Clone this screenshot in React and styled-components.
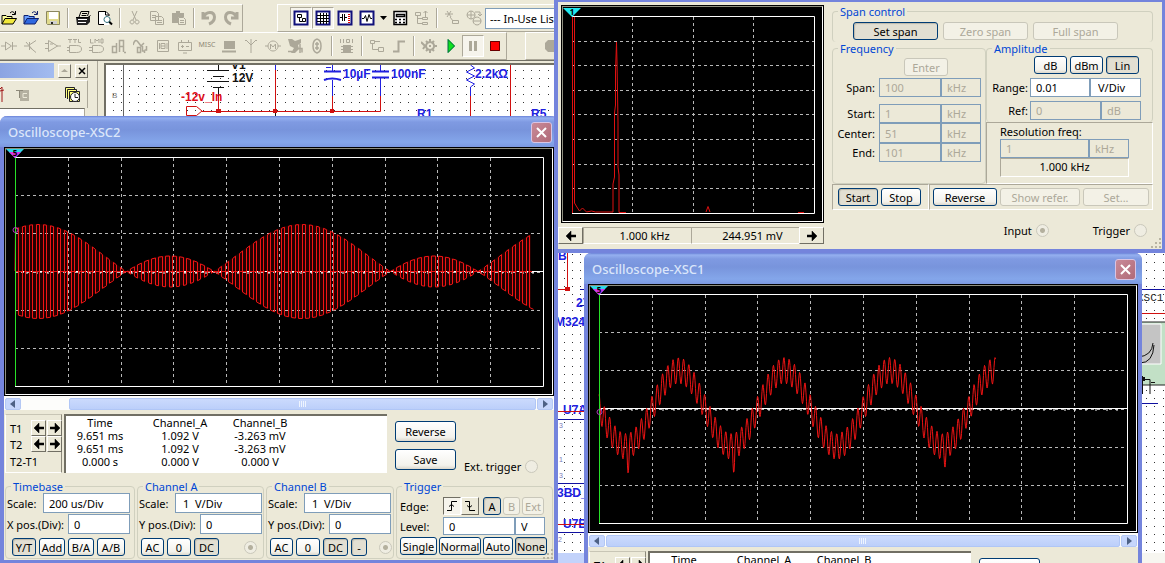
import React, { useId } from 'react';
import styled, { createGlobalStyle } from 'styled-components';

const GlobalStyle = createGlobalStyle`
*{
    box-sizing:border-box;
}
body{
    margin:0;
    overflow:hidden;
    background:#ece9d8;
    font-family:"Noto Sans", Tahoma, sans-serif;
    font-size:11px;
    line-height:13px;
    color:#000;
}
button, input, select{
    font:inherit;
    color:inherit;
    margin:0;
}
svg{
    display:block;
}
`

const Desktop = styled.div`
position:relative;
display:flex;
flex-direction:column;
height:100vh;
overflow:hidden;
padding-top:4px;
`

/* ---------- toolbars ---------- */

const ToolRow = styled.div`
display:flex;
align-items:stretch;
gap:${props => props.$gap}px;
height:${props => props.$height}px;
`
const Toolbar = styled.div`
display:flex;
align-items:center;
margin-left:${props => props.$first ? '-3px' : '0'};
padding-left:${props => props.$pad || 0}px;
border-top:1px solid #fff;
border-left:1px solid #fff;
border-right:1px solid #aca899;
border-bottom:1px solid #aca899;
flex:${props => props.$grow ? '1' : 'none'};
`
const ToolButton = styled.button`
display:flex;
align-items:center;
justify-content:center;
width:${props => props.$narrow ? 11 : 22}px;
height:22px;
padding:0;
border:1px solid ${props => props.$pressed ? '#aca899' : 'transparent'};
border-right-color:${props => props.$pressed ? '#fff' : 'transparent'};
border-bottom-color:${props => props.$pressed ? '#fff' : 'transparent'};
background:${props => props.$pressed ? '#f6f4ec' : 'transparent'};
flex:none;
`
const ToolSeparator = styled.span`
width:2px;
height:20px;
margin:0 3px;
border-left:1px solid #aca899;
border-right:1px solid #fff;
`
const InUseSelect = styled.select`
width:140px;
height:21px;
padding:0 4px;
border:1px solid #7f9db9;
background:#fff;
appearance:none;
`

const GRAY = '#aca899'

// f = filled parts, s = stroked parts, [path, colour]
const ICONS = {
    open: { f: [['M1 14V5h5l1 1h5v3H4z', '#ffff9c'], ['M1 14l3-6h12l-4 6z', '#f0e83c']], s: [['M1 14V5.5h4l1 1h5v2M1 14l3-5.500h11.500l-3.500 5.500zM9 3q3-3 5 1M14.500 1v3.500H11', '#000']] },
    openBlue: { f: [['M1 14V5h5l1 1h5v3H4z', '#6aa0ff'], ['M1 14l3-6h12l-4 6z', '#2f68e0']], s: [['M1 14V5.500h4l1 1h5v2M1 14l3-5.500h11.500l-3.500 5.500zM9 3q3-3 5 1M14.500 1v3.500H11', '#10206a']] },
    save: { f: [['M2 2h13v13H3l-1-1z', '#e0da8c'], ['M4 2h9v7H4z', '#fff'], ['M5 11h7v4H5z', '#d0d0d0'], ['M6 12h2v3H6z', '#222']], s: [['M1.500 1.500h13v13h-12l-1-1z', '#8a8660']] },
    print: { f: [['M1 7h12l2-1v6l-3 3H2z', '#222'], ['M3 9h9v1H3zM3 12h8v1H3z', '#fff']], s: [['M4 7l2-5.500h8L12.500 6M7 3.500h5M6.500 5.500h5M1 7.500h12l2.500-2', '#000']] },
    preview: { f: [['M1 1h8l3 3v11H1z', '#fff']], s: [['M7 14.500H1.500v-13H9l3 3V6M8.500 1.500V5H12', '#000'], ['M12 11.500l3 3', '#000', 2], ['M10 6.500a3 3 0 1 0 .1 0z', '#2b6d7a']] },
    cut: { s: [['M5 1l4 9M10 1L6 10M5 10a2 2 0 1 0 .1 0M10 10a2 2 0 1 0 .1 0', GRAY]] },
    copy: { s: [['M1.500 1.500h6l2 2v7h-8zM6.500 6.500h6l2 2v6h-8zM3 5.500h4M3 7.500h3M8 10.500h5M8 12.500h5', GRAY]] },
    paste: { f: [['M1 3h4V1h4v2h4v4H7v6H1z', GRAY]], s: [['M7.500 7.500h5l2 2v5h-7zM9 10.500h4M9 12.500h4', GRAY]] },
    undo: { s: [['M2 2v6h6M2.500 7.500C5 1 13 1 13.500 7c0 4-3 6-5.500 7', GRAY, 3]] },
    redo: { s: [['M14 2v6H8M13.500 7.500C11 1 3 1 2.500 7c0 4 3 6 5.500 7', GRAY, 3]] },
    tree: { f: [['M1 1h14v14H1z', '#fff']], s: [['M1.500 1.500h13v13h-13z', '#10107a', 2], ['M4.500 4.500h4v3h-4zM9.500 8.500h3v3h-3zM6.500 8v3.500h3', '#000']] },
    sheet: { f: [['M1 1h14v14H1z', '#fff']], s: [['M1.500 1.500h13v13h-13z', '#10107a', 2], ['M2 5.500h12M2 8.500h12M2 11.500h12M5.500 3v11M8.500 3v11M11.500 3v11', '#000']] },
    parts: { f: [['M1 1h14v14H1z', '#fff']], s: [['M1.500 1.500h13v13h-13z', '#10107a', 2], ['M3 7.500h2M5.500 4v7M7.500 4v7M8 7.500h2', '#000'], ['M11 4.500h2M11 6.500h2M11 8.500h2M11 10.500h2M11 12.500h2', '#d00']] },
    graph: { f: [['M1 1h14v14H1z', '#fff']], s: [['M1.500 1.500h13v13h-13z', '#10107a', 2], ['M3 8.500h2l1.500-3 1.500 6 2-7 1.500 4H13', '#000']] },
    drop: { f: [['M0 6h7L3.500 10z', '#000']] },
    calc: { f: [['M2 2h13v13H2z', '#fff']], s: [['M2 1.500h12.500v13H2zM4.500 4.500h8v2h-8zM3 9.500h2M7 9.500h2M11 9.500h2M3 12.500h2M7 12.500h2M11 12.500h2', '#000', 1.5]] },
    hier: { s: [['M1.500 2.500h5v3h-5zM8.500 7.500h5v2h-5zM8.500 12.500h5v2h-5zM3.500 6v7.500h5M3.500 8.500h5M11.500 7V1M9.500 3l2-2 2 2', GRAY]] },
    wire: { s: [['M1 4h8M3 1l4 6M7 1L3 7M6 7l3 4M8.500 10.500h6v3h-6z', GRAY]] },
    globes: { s: [['M5 1a4 4 0 1 0 .1 0M11 7a4 4 0 1 0 .1 0M1 5h8M5 1v8M7 11h8M9 2h5v3M12 4l2 2 2-2', GRAY]] },
    diode: { s: [['M0 8h4M4.500 4v8l6-4zM11.500 4v8M12 8h4', GRAY]] },
    transistor: { s: [['M1 8h5M6.500 4v8M7 6.500l6-4M7 9.500l6 5M3 4l6 7', GRAY]] },
    opamp: { s: [['M3.500 2.500v11l9-5.500zM0 5.500h3M0 10.500h3M12 8h4M5 6h3', GRAY]] },
    gateA: { s: [['M1 1.500h4M3 1v4M6 1.500h4M8 1v4M11.500 1v3.500H14M2.500 7.500h7q5 0 5 3.500t-5 3.500h-7zM0 9.500h2M0 12.500h2', GRAY]] },
    gateB: { s: [['M1.500 1v4h3M6 5V1l2 2 2-2v4M12 1h2v4h-2zM3.500 7.500h6q5 0 5 3.500t-5 3.500h-6zM0 9.500h3M0 12.500h3', GRAY]] },
    mixed: { s: [['M1.500 8.500h4v6h-4zM5.500 5v10M8.500 14V2.500h4V14M8.500 8.500h4M13 14.500h2', GRAY, 1.5]] },
    wave: { s: [['M0 7q2-7 5-3t3 4 3-3M4.500 9.500h3v5h-3zM9.500 8v5h2v2M13.500 8v4h-2', GRAY, 1.5]] },
    display: { s: [['M2.500 2.500h11v11h-11zM6 5.500h4v5H6zM6 8h4M4.500 5v6M12 5v6', GRAY]] },
    fuse: { s: [['M1.500 4.500h13v8h-13zM4.500 2v2M11.500 2v2M4 8.500h3M9 8.500h3M5.500 7v3M6 15h4', GRAY]] },
    laptop: { f: [['M3 3h11v8H3z', GRAY]], s: [['M1 13.500h14', GRAY, 2]] },
    antenna: { s: [['M8 15V7L3 2M8 7l5-5M8 1v6M2 2.500h2M12 2.500h2', GRAY]] },
    motor: { s: [['M0 8h3M13 8h3M8 3a5 5 0 1 0 .1 0M5.500 11V6l2.500 3 2.500-3v5', GRAY]] },
    ladder: { f: [['M1 1h4l3 2 6-2v4l-3 2 1 4-4 4H4l3-5-4-2z', GRAY]], s: [['M1 13.500h4M11 10.500h4v4M13 6v9', GRAY, 1.5]] },
    ring: { s: [['M8 1q4 1 4 7t-4 7q-4-1-4-7t4-7M8 4v8M6 6h4M6 10h4', GRAY, 1.5]] },
    chip: { f: [['M4 7h8v8H4z', GRAY]], s: [['M1.500 1v4M4.500 1v4M7.500 1.500h3v3h-3zM13.500 1v4M2 8.500h12M2 11.500h12M2 14.500h12', GRAY]] },
    block: { s: [['M1.500 2.500h4v3h-4zM9.500 9.500h5v4h-5zM3.500 6v5.500H9M6 3.500h5', GRAY]] },
    step: { s: [['M2 13.500h5.500v-10H14', GRAY, 2]] },
    gear: { s: [['M0 4l4 4-2 3M9 4a4 4 0 1 0 .1 0', GRAY, 2], ['M9 1v3M9 12v3M13 8h3M5 3l2 2M11 11l2 2M13 3l-2 2M5 13l2-2M9 7v2', GRAY, 2]] },
    run: { f: [['M5 1l7 7-7 7z', '#10e020']], s: [['M5 1.500l6.500 6.500L5 14.500z', '#064']] },
    pause: { f: [['M4 3h3v10H4zM9 3h3v10H9z', GRAY]] },
    stop: { f: [['M3 3h10v10H3z', '#f00']], s: [['M3.500 3.500h9v9h-9z', '#600']] },
    stopGray: { f: [['M5 2h11v12H5l-3-3V5z', GRAY]] },
    misc: { text: 'MISC' },
}

function Icon({ name }) {
    const icon = ICONS[name]
    return (
        <svg width={name === 'drop' ? 7 : name === 'misc' ? 18 : 16} height="16" fill="none">
            {(icon.f || []).map(([d, fill]) => <path key={d} d={d} fill={fill} />)}
            {(icon.s || []).map(([d, stroke, w]) => <path key={d} d={d} stroke={stroke} strokeWidth={w || 1} />)}
            {icon.text && <text x="9" y="9" textAnchor="middle" fontSize="7" fill="#8c8876">{icon.text}</text>}
        </svg>
    )
}

function Tools({ items, ...rest }) {
    return (
        <Toolbar {...rest}>
            {items.map((item, i) => {
                if (item === '|') return <ToolSeparator key={i} />
                const name = item.replace('*', '')
                return (
                    <ToolButton key={i} aria-label={name} $pressed={item.endsWith('*')} $narrow={name === 'drop'}>
                        <Icon name={name} />
                    </ToolButton>
                )
            })}
            {rest.children}
        </Toolbar>
    )
}

/* ---------- dock and schematic ---------- */

const Workspace = styled.div`
display:flex;
flex:1;
min-height:0;
border-top:1px solid #716f64;
`
const Dock = styled.div`
display:flex;
flex-direction:column;
width:98px;
flex:none;
padding:2px 9px 0 0;
border-right:1px solid #aca899;
`
const DockTitle = styled.div`
display:flex;
align-items:center;
gap:4px;
height:15px;
`
const DockStripe = styled.span`
flex:1;
height:15px;
background:linear-gradient(90deg,#8ba4e2,#a3bcf0);
`
const DockButton = styled.button`
display:flex;
align-items:center;
justify-content:center;
width:13px;
height:14px;
padding:0;
border:1px solid;
border-color:#fff #716f64 #716f64 #fff;
background:#ece9d8;
`
const DockTools = styled.div`
display:flex;
align-items:center;
justify-content:space-between;
height:28px;
margin-top:2px;
padding-right:6px;
border-top:1px solid #fff;
border-right:1px solid #aca899;
`
const DockTree = styled.div`
flex:1;
margin-right:3px;
border-top:1px solid #716f64;
border-right:1px solid #aca899;
background:#fff;
`
const Editor = styled.div`
display:flex;
flex-direction:column;
flex:1;
min-width:0;
margin-left:6px;
margin-top:2px;
border-top:2px solid #716f64;
border-left:2px solid #716f64;
background:#fff;
`
const Sheet = styled.svg`
flex:1;
width:100%;
min-height:0;
`
const EditorScroll = styled.div`
height:10px;
flex:none;
background:#f7f6f0;
`
const EditorThumb = styled.div`
width:60%;
height:10px;
background:#c3d3fb;
`

// snap point grid of the sheet, 8.2px apart
function gridDots() {
    let d = ''
    for (let y = 5; y < 1000; y += 8)
        for (let x = 7; x < 1900; x += 8.2)
            d += `M${Math.round(x)} ${y}h1`
    return d
}
const DOTS = gridDots()

const BLUE = '#2020e0'
const WIRE = '#d01010'

function Schematic() {
    return (
        <Sheet>
            <path d={DOTS} transform="translate(0 .5)" stroke="#333" shapeRendering="crispEdges" />
            <g transform="translate(-106 -65)" fill="none" fontFamily='"Liberation Sans", Arial, sans-serif' fontWeight="bold" fontSize="12">
                <path d="M123.500 65V560" stroke="#666" />
                <text x="112" y="98" fontSize="8" fontWeight="normal" fill="#777">B</text>

                <path d="M218.500 65V70M207 70.500h22M213 76.500h11M207 81.500h22M213 87.500h11M218.500 88v9M275.500 111v8" stroke="#111" />
                <text x="231" y="69" fill="#111">V1</text>
                <text x="232" y="82" fill="#111">12V</text>
                <path d="M218.500 96v15M275.500 70v41M332.500 96v15M380.500 96v15.500H202M470.500 96v22M510.500 65v53M186.500 106.500h10l5.500 4.500-5.500 4.500h-10z" stroke={WIRE} />
                <path d="M216 109h5v4h-5zM273 109h4v4h-4zM330 109h4v4h-4z" fill={WIRE} />
                <text x="181" y="101" fill="#e01020">-12v_In</text>

                <path d="M275.500 65v5M332.500 65v6M332.500 80v16M380.500 65v6M380.500 78v18M326 67.500h5M470.500 65l4 3-8 4 8 4-8 4 8 4-4 3v9" stroke={BLUE} />
                <path d="M324 71.500h17M324 80q8-3 17 0M372 71.500h17M372 77.500h17" stroke={BLUE} strokeWidth="2" />
                <g fill={BLUE}>
                    <text x="343" y="78">10µF</text>
                    <text x="391" y="78">100nF</text>
                    <text x="475" y="78">2.2kΩ</text>
                    <text x="417" y="118">R1</text>
                    <text x="531" y="118">R5</text>
                    <text x="550" y="260">EB</text>
                    <text x="576" y="307">27</text>
                    <text x="555" y="326">M324N</text>
                    <text x="563" y="414">U7A</text>
                    <text x="557" y="497">3BD_1</text>
                    <text x="563" y="528">U7B</text>
                </g>
                <path d="M567.500 240v49M540 289.500h28M540 411.500h50M540 524.500h50M1135 313.500h40" stroke={WIRE} />
                <path d="M565 287h5v4h-5z" fill={WIRE} />
                <path d="M580 289.500h10M580 305.500h10M540 419.500h50M540 483.500h50M540 532.500h50M1135 289.500h40M1135 403.500h23" stroke="#1010a0" />
                <g fontSize="7" fontWeight="normal" fill="#7a7ab8">
                    <text x="559" y="428">3</text>
                    <text x="559" y="462">1</text>
                    <text x="559" y="478">3</text>
                    <text x="558" y="542">2</text>
                </g>

                <text x="1137" y="301" fontFamily='"Liberation Mono", monospace' fontSize="11" fontWeight="normal" fill="#222">XSC1</text>
                <path d="M1130 322h45v63h-45z" fill="#c2e0c6" stroke="#222" />
                <path d="M1130 324h31v40h-31z" fill="#c4c4c4" stroke="#fff" />
                <path d="M1138 357q14-1 15-14M1140 363q13 0 14-18" stroke="#111" />
                <path d="M1142 379.500h8V394M1142.500 376v18M1151 382.500h4" stroke="#111" />
                <path d="M1141 377h4v4h-4z" fill="#111" />
            </g>
        </Sheet>
    )
}

/* ---------- windows ---------- */

const Window = styled.section`
position:absolute;
left:${props => props.$left}px;
top:${props => props.$top}px;
width:558px;
border:4px solid #7484dc;
border-top:0;
border-bottom-width:3px;
border-radius:7px 7px 0 0;
background:#ece9d8;
`
const TitleBar = styled.header`
display:flex;
align-items:center;
justify-content:space-between;
height:31px;
margin:0 -4px;
padding:1px 6px 0 8px;
border-radius:7px 7px 0 0;
background:linear-gradient(#6a82d8 0,#95b0f0 2px,#7f9ae2 6px,#7894dc 14px,#84a6ea 26px,#7c98e0 31px);
`
const Title = styled.h1`
margin:0;
font-size:13px;
line-height:18px;
font-weight:500;
color:#dbe6fa;
`
const CloseButton = styled.button`
display:flex;
align-items:center;
justify-content:center;
width:21px;
height:21px;
padding:0;
border:1px solid #d9c4e4;
border-radius:3px;
background:linear-gradient(135deg,#c98a98,#b06a78);
`
const AnalyzerWindow = styled.section`
position:absolute;
left:554px;
right:0;
top:0;
display:flex;
height:253px;
padding:3px 9px 0 3px;
border:solid #7484dc;
border-width:2px 3px 4px 4px;
background:#ece9d8;
`
const Screen = styled.div`
border:1px solid #000;
background:#000;
`
const ScreenInner = styled.div`
border:1px solid;
border-color:#8f8f80 #fff #fff #8f8f80;
`
const Grip = styled.svg`
position:absolute;
right:0;
bottom:0;
`

function CornerGrip() {
    return (
        <Grip width="12" height="12">
            <path d="M9 1h2v2H9zM5 5h2v2H5zM9 5h2v2H9zM1 9h2v2H1zM5 9h2v2H5zM9 9h2v2H9z" fill="#b8b4a2" />
        </Grip>
    )
}

function Arrow({ back }) {
    return (
        <svg width="10" height="10">
            <path d={back ? 'M0 5l5-5v4h5v2H5v4z' : 'M10 5L5 0v4H0v2h5v4z'} fill="#000" stroke="#000" strokeWidth=".5" />
        </svg>
    )
}

/* ---------- controls ---------- */

const Btn = styled.button`
width:${props => props.$w}px;
height:${props => props.$h || 18}px;
flex:none;
padding:0;
line-height:15px;
text-align:center;
white-space:nowrap;
border:1px solid #003c74;
border-radius:3px;
background:${props => props.$on ? '#e2dfd2' : 'linear-gradient(#fff,#f3f2ec 80%,#dcd8cc)'};
box-shadow:${props => props.$on ? 'inset 1px 1px 1px #bdb9aa' : 'none'};
&:disabled{
    color:#aca899;
    border-color:#c9c7ba;
    background:#f3f1e6;
}
`
const TextInput = styled.input`
width:${props => props.$w}px;
height:${props => props.$h || 19}px;
flex:none;
padding:0 0 0 ${props => props.$pad || 5}px;
border:1px solid #7f9db9;
border-radius:0;
background:#fff;
&:disabled{
    color:#aca899;
    background:#ece9d8;
}
`
const Group = styled.fieldset`
min-width:0;
margin:0;
padding:${props => props.$padTop || 0}px 1px 2px;
border:1px solid #d0d0bf;
border-bottom-width:${props => props.$open ? 0 : 1}px;
border-radius:4px;
`
const Legend = styled.legend`
height:13px;
margin-left:4px;
padding:0 2px;
color:#0046d5;
`
const Row = styled.div`
display:flex;
align-items:center;
justify-content:${props => props.$justify || 'flex-start'};
gap:${props => props.$gap || 0}px;
margin-top:${props => props.$mt || 0}px;
padding:0 ${props => props.$pr || 0}px 0 ${props => props.$pl || 0}px;
`
const Label = styled.label`
width:${props => props.$w ? props.$w + 'px' : 'auto'};
flex:none;
text-align:${props => props.$right ? 'right' : 'left'};
white-space:nowrap;
`
const Radio = styled.input`
appearance:none;
width:13px;
height:13px;
flex:none;
border:1px solid #cac8bb;
border-radius:50%;
background:#efede2;
&:checked{
    background:radial-gradient(#b4b09e 0 2px,#efede2 3px);
}
`

function Field({ label, labelWidth, right, gap, mt, w, value, h, pad, unit, unitWidth, disabled }) {
    const id = useId()
    return (
        <Row $mt={mt}>
            <Row $gap={gap}>
                <Label htmlFor={id} $w={labelWidth} $right={right}>{label}</Label>
                <TextInput id={id} $w={w} $h={h} $pad={pad} defaultValue={value} disabled={disabled} />
            </Row>
            {unit && <TextInput aria-label={label + ' unit'} $w={unitWidth} $h={h} $pad={unitWidth > 45 ? 7 : 5} defaultValue={unit} disabled={disabled} />}
        </Row>
    )
}

function RadioField({ label, checked }) {
    return (
        <Row as="label" $gap={4}>
            {label}
            <Radio type="radio" defaultChecked={checked} disabled />
        </Row>
    )
}

/* ---------- oscilloscope ---------- */

const ScrollBar = styled.div`
display:flex;
justify-content:space-between;
height:14px;
padding:2px 1px 0;
background:#fdfdfb;
`
const ScrollButton = styled.button`
display:flex;
align-items:center;
justify-content:center;
width:16px;
height:12px;
padding:0;
border:1px solid #b4c8f4;
border-radius:2px;
background:#c6d6fc;
`
const ScrollTrack = styled.div`
display:flex;
flex:1;
padding-left:${props => props.$offset}px;
padding-right:1px;
`
const ScrollThumb = styled.div`
display:flex;
align-items:center;
justify-content:center;
flex:1;
height:12px;
border:1px solid #b0c6f6;
border-radius:2px;
background:linear-gradient(#cbdafd,#bccffa);
`
const Readings = styled.div`
display:flex;
gap:2px;
padding:4px 1px 0;
`
const Cursors = styled.div`
display:grid;
grid-template-columns:21px 16px 16px;
grid-template-rows:16px 16px 18px;
align-items:center;
width:57px;
height:59px;
padding:5px 0 0 4px;
white-space:nowrap;
border:1px solid #aca899;
border-color:#c8c5b5 #8d8a7c #fff #fff;
`
const StepButton = styled.button`
display:flex;
align-items:center;
justify-content:center;
width:${props => props.$wide ? 25 : 15}px;
height:${props => props.$wide ? 17 : 16}px;
padding:0;
border:1px solid;
border-color:#fff #716f64 #716f64 #fff;
background:#ece9d8;
`
const Readout = styled.div`
width:323px;
height:59px;
border-top:2px solid #716f64;
border-left:2px solid #716f64;
background:#fff;
`
const ReadoutTable = styled.table`
border-collapse:collapse;
table-layout:fixed;
width:240px;
margin-left:-6px;
th, td{
    width:80px;
    padding:0;
    text-align:center;
    font-weight:normal;
    line-height:13px;
}
`
const SideButtons = styled.div`
display:flex;
flex-direction:column;
gap:7px;
padding:7px 0 0 6px;
`
const ExtTrigger = styled.div`
display:flex;
align-items:flex-end;
padding-left:6px;
`
const Groups = styled.div`
display:grid;
grid-template-columns:130px 127px 128px 1fr;
gap:2px;
padding:7px 1px 1px;
`
const EdgeButton = styled.button`
display:flex;
align-items:center;
justify-content:center;
width:18px;
height:18px;
padding:0;
border:1px solid;
border-color:${props => props.$on ? '#716f64 #fff #fff #716f64' : '#fff #716f64 #716f64 #fff'};
background:${props => props.$on ? '#f6f4ec' : '#ece9d8'};
`

const MID = 122
const LEFT = 9

// amplitude modulated burst, chopped between both halves of the envelope
function burstPath() {
    const env = x => 15.75 + 31.25 * Math.cos((2 * Math.PI * (x - 32)) / 264)
    let d = `M${LEFT} ${MID}`
    let fill = `M${LEFT} ${MID - env(LEFT)}`
    let sign = -1
    for (let x = LEFT; x < 526; x += 3.5) {
        const from = Math.floor(x) + .5
        const to = Math.floor(x + 3.5) + .5
        d += `L${from} ${MID + .5 + sign * env(x)}L${to} ${MID + .5 + sign * env(x + 3.5)}`
        sign = -sign
    }
    for (let x = LEFT; x <= 526; x += 3) fill += `L${x} ${MID - env(x)}`
    for (let x = 525; x >= LEFT; x -= 3) fill += `L${x} ${MID + env(x)}`
    return { d, fill: fill + 'z' }
}

// slow sine with the fast carrier riding on it, some troughs overshoot
const OVERSHOOT = [[38, 14], [143.7, 14], [354.9, 8]]

function ripplePath() {
    let d = ''
    for (let x = 9; x <= 405.5; x += .5) {
        const slow = Math.sin((2 * Math.PI * (x - 9.5)) / 105.6)
        const fast = -Math.cos((2 * Math.PI * (x - 88.3)) / 5.28)
        const over = OVERSHOOT.find(([at]) => Math.abs(x - at) < 1.3)
        const y = MID + .5 + 38 * slow + (13 + (over ? over[1] : 0)) * fast
        d += `${d ? 'L' : 'M'}${x} ${y.toFixed(1)}`
    }
    return d
}

function Marker({ x, y, fill, tip, children }) {
    return (
        <g>
            <path d={`M${x - 9} ${y - 7}h18l-9 9z`} fill={fill} />
            {tip && <path d={`M${x - 6} ${y - 4}h12l-6 6z`} fill={tip} />}
            <text x={x} y={y} textAnchor="middle" fontSize="8" fontWeight="bold" fill="#000">{children}</text>
        </g>
    )
}

function ScopePlot({ signal }) {
    const cols = [1, 2, 3, 4, 5, 6, 7, 8, 9].map(i => Math.round(LEFT + 52.8 * i) + .5)
    const rows = [1, 2, 4, 5].map(i => Math.round(8 + 38.2 * i) + .5)
    const burst = signal === 'burst' ? burstPath() : null
    let ticks = ''
    for (let i = 1; i < 50; i++) ticks += `M${Math.round(LEFT + 10.56 * i)} ${MID + 2}h2`
    return (
        <svg width="100%" height="245" viewBox="0 0 546 245">
            {burst && <path d={burst.fill} fill="#240000" />}
            <g stroke="#b8b8b8" strokeDasharray="3 3" shapeRendering="crispEdges">
                {cols.map(x => <path key={x} d={`M${x} 9V237`} />)}
                {rows.map(y => <path key={y} d={`M9 ${y}H537`} />)}
                <path d={`M9 ${MID + 1.5}H537`} />
            </g>
            <path d={`M9 8.500H537.500V237.500H9M9 ${MID + .5}H537`} stroke="#fff" fill="none" />
            <path d={ticks} stroke="#fff" />
            {burst && <path d={`M9 ${MID + .5}H526`} stroke="#e01818" strokeDasharray="7 2" />}
            <path d={burst ? burst.d : ripplePath()} stroke="#f01414" fill="none" />
            <path d="M9.500 9V237" stroke="#28e028" shapeRendering="crispEdges" />
            <circle cx="9.500" cy={burst ? 81 : 126} r="2.500" stroke="#b040c0" fill="none" />
            <Marker x={9} y={7} fill="#30d8e8" tip="#e030f0">5</Marker>
        </svg>
    )
}

function Channel({ name, minus }) {
    return (
        <Group>
            <Legend>{name}</Legend>
            <Field label="Scale:" labelWidth={36} w={87} h={20} pad={7} value="1  V/Div" />
            <Field label="Y pos.(Div):" labelWidth={61} w={62} h={20} value="0" mt={1} />
            <Row $gap={3} $pl={2} $mt={4}>
                <Btn $w={23}>AC</Btn>
                <Btn $w={24}>0</Btn>
                <Btn $w={25} $on>DC</Btn>
                {minus && <Btn $w={16} $on>-</Btn>}
                <Row $pl={minus ? 9 : 22}>
                    <Radio type="radio" aria-label={name + ' input'} defaultChecked disabled />
                </Row>
            </Row>
        </Group>
    )
}

function Oscilloscope({ title, left, top, signal, scroll }) {
    return (
        <Window $left={left} $top={top}>
            <TitleBar>
                <Title>{title}</Title>
                <CloseButton aria-label="Close">
                    <svg width="13" height="13">
                        <path d="M2 2l9 9M11 2l-9 9" stroke="#fff" strokeWidth="2" />
                    </svg>
                </CloseButton>
            </TitleBar>
            <Screen>
                <ScreenInner>
                    <ScopePlot signal={signal} />
                </ScreenInner>
            </Screen>
            <ScrollBar>
                <ScrollButton aria-label="Scroll left"><svg width="6" height="8"><path d="M5 0v8L0 4z" fill="#4d6185" /></svg></ScrollButton>
                <ScrollTrack $offset={scroll}>
                    <ScrollThumb>
                        <svg width="8" height="6"><path d="M.5 0v6M2.500 0v6M4.500 0v6M6.500 0v6" stroke="#eef4fe" /></svg>
                    </ScrollThumb>
                </ScrollTrack>
                <ScrollButton aria-label="Scroll right"><svg width="6" height="8"><path d="M1 0v8l5-4z" fill="#4d6185" /></svg></ScrollButton>
            </ScrollBar>
            <Readings>
                <Cursors>
                    <span>T1</span>
                    <StepButton aria-label="T1 back"><Arrow back /></StepButton>
                    <StepButton aria-label="T1 forward"><Arrow /></StepButton>
                    <span>T2</span>
                    <StepButton aria-label="T2 back"><Arrow back /></StepButton>
                    <StepButton aria-label="T2 forward"><Arrow /></StepButton>
                    <span>T2-T1</span>
                </Cursors>
                <Readout>
                    <ReadoutTable>
                        <thead>
                            <tr><th>Time</th><th>Channel_A</th><th>Channel_B</th></tr>
                        </thead>
                        <tbody>
                            <tr><td>9.651 ms</td><td>1.092 V</td><td>-3.263 mV</td></tr>
                            <tr><td>9.651 ms</td><td>1.092 V</td><td>-3.263 mV</td></tr>
                            <tr><td>0.000 s</td><td>0.000 V</td><td>0.000 V</td></tr>
                        </tbody>
                    </ReadoutTable>
                </Readout>
                <SideButtons>
                    <Btn $w={61} $h={21}>Reverse</Btn>
                    <Btn $w={61} $h={21}>Save</Btn>
                </SideButtons>
                <ExtTrigger>
                    <RadioField label="Ext. trigger" />
                </ExtTrigger>
            </Readings>
            <Groups>
                <Group>
                    <Legend>Timebase</Legend>
                    <Field label="Scale:" labelWidth={36} w={87} h={20} value="200 us/Div" />
                    <Field label="X pos.(Div):" labelWidth={61} w={62} h={20} value="0" mt={1} />
                    <Row $gap={3} $pl={5} $mt={4}>
                        <Btn $w={24} $on>Y/T</Btn>
                        <Btn $w={26}>Add</Btn>
                        <Btn $w={26}>B/A</Btn>
                        <Btn $w={28}>A/B</Btn>
                    </Row>
                </Group>
                <Channel name="Channel A" />
                <Channel name="Channel B" minus />
                <Group $padTop={4}>
                    <Legend>Trigger</Legend>
                    <Row $pl={2}>
                        <Label as="span" $w={43}>Edge:</Label>
                        <EdgeButton $on aria-label="Rising edge"><svg width="12" height="12"><path d="M1 10.500h4.500v-9H11M3 6.500l2.500-2 2.500 2" stroke="#000" fill="none" /></svg></EdgeButton>
                        <EdgeButton aria-label="Falling edge"><svg width="12" height="12"><path d="M1 1.500h4.500v9H11M3 5.500l2.500 2 2.500-2" stroke="#000" fill="none" /></svg></EdgeButton>
                        <Row $gap={2} $pl={4}>
                            <Btn $w={18} $on>A</Btn>
                            <Btn $w={17} disabled>B</Btn>
                            <Btn $w={22} disabled>Ext</Btn>
                        </Row>
                    </Row>
                    <Row $pl={2}>
                        <Field label="Level:" labelWidth={43} w={72} h={18} value="0" unit="V" unitWidth={30} mt={2} />
                    </Row>
                    <Row $gap={2} $pl={2} $mt={2}>
                        <Btn $w={37}>Single</Btn>
                        <Btn $w={42}>Normal</Btn>
                        <Btn $w={30}>Auto</Btn>
                        <Btn $w={32} $on>None</Btn>
                    </Row>
                </Group>
            </Groups>
            <CornerGrip />
        </Window>
    )
}

/* ---------- spectrum analyzer ---------- */

const ScreenColumn = styled.div`
width:263px;
flex:none;
`
const Nav = styled.div`
display:flex;
margin-top:4px;
margin-left:-3px;
`
const NavValue = styled.output`
flex:1;
padding-left:14px;
text-align:center;
line-height:15px;
border-top:1px solid #aca899;
border-left:1px solid #aca899;
border-bottom:1px solid #fff;
`
const Controls = styled.div`
flex:1;
min-width:0;
margin-left:8px;
`
const Middle = styled.div`
display:grid;
grid-template-columns:154px 1fr;
height:142px;
`
const Stack = styled.div`
display:flex;
flex-direction:column;
`
const Etched = styled.div`
flex:${props => props.$grow ? '1' : 'none'};
padding:${props => props.$pad || '4px 5px'};
border:1px solid;
border-color:#aca899 #fff #fff #aca899;
`
const Resolution = styled.output`
display:block;
width:129px;
height:19px;
text-align:center;
line-height:16px;
border:1px solid;
border-color:#aca899 #fff #fff #aca899;
`

function SpectrumPlot() {
    const rows = [1, 2, 3, 4, 5, 6, 7].map(i => Math.round(9 + 24.6 * i) + .5)
    return (
        <svg width="259" height="214">
            <g stroke="#b8b8b8" strokeDasharray="3 3" shapeRendering="crispEdges">
                {[69.5, 130.5, 190.5].map(x => <path key={x} d={`M${x} 10V206`} />)}
                {rows.map(y => <path key={y} d={`M9 ${y}H251`} />)}
            </g>
            <path d="M9 9.500H251.500V206.500H9" stroke="#fff" fill="none" />
            <path d="M9.500 206V10M11.500 10V196l3 5 2 3 3-3 4 4 5-1 4 1H50V177l1.500-7V106l1-8V65l1-30 .5 20 1 60V160l1 8v37.500h7M143 205l2-5.500 2 5.500M235 205.500h6" stroke="#e01010" fill="none" />
            <Marker x={9} y={8} fill="#20e8f0">1</Marker>
        </svg>
    )
}

function SpectrumAnalyzer() {
    return (
        <AnalyzerWindow>
            <ScreenColumn>
                <Screen>
                    <ScreenInner>
                        <SpectrumPlot />
                    </ScreenInner>
                </Screen>
                <Nav>
                    <StepButton $wide aria-label="Cursor left"><Arrow back /></StepButton>
                    <NavValue>1.000 kHz</NavValue>
                    <NavValue>244.951 mV</NavValue>
                    <StepButton $wide aria-label="Cursor right"><Arrow /></StepButton>
                </Nav>
            </ScreenColumn>
            <Controls>
                <Group $open $padTop={4}>
                    <Legend>Span control</Legend>
                    <Row $gap={5} $pl={19}>
                        <Btn $w={85} $on>Set span</Btn>
                        <Btn $w={85} disabled>Zero span</Btn>
                        <Btn $w={85} disabled>Full span</Btn>
                    </Row>
                </Group>
                <Middle>
                    <Group>
                        <Legend>Frequency</Legend>
                        <Row $pl={70} $mt={3}>
                            <Btn $w={44} disabled>Enter</Btn>
                        </Row>
                        <Field label="Span:" labelWidth={41} right gap={4} w={62} value="100" unit="kHz" unitWidth={40} mt={2} disabled />
                        <Field label="Start:" labelWidth={41} right gap={4} w={62} value="1" unit="kHz" unitWidth={40} mt={7} disabled />
                        <Field label="Center:" labelWidth={41} right gap={4} w={62} h={20} value="51" unit="kHz" unitWidth={40} disabled />
                        <Field label="End:" labelWidth={41} right gap={4} w={62} value="101" unit="kHz" unitWidth={40} disabled />
                    </Group>
                    <Stack>
                        <Group $open>
                            <Legend>Amplitude</Legend>
                            <Row $gap={3} $mt={1} $pl={46}>
                                <Btn $w={33}>dB</Btn>
                                <Btn $w={33}>dBm</Btn>
                                <Btn $w={33} $on>Lin</Btn>
                            </Row>
                            <Field label="Range:" labelWidth={40} right gap={2} w={60} value="0.01" unit="V/Div" unitWidth={51} mt={4} />
                            <Field label="Ref:" labelWidth={40} right gap={2} w={71} value="0" unit="dB" unitWidth={40} mt={4} disabled />
                        </Group>
                        <Etched $grow $pad="2px 12px 0 13px">
                            <Label htmlFor="resolution">Resolution freq:</Label>
                            <Row $mt={1}>
                                <TextInput id="resolution" $w={89} defaultValue="1" disabled />
                                <TextInput aria-label="Resolution unit" $w={40} defaultValue="kHz" disabled />
                            </Row>
                            <Resolution>1.000 kHz</Resolution>
                        </Etched>
                    </Stack>
                </Middle>
                <Row>
                    <Etched $pad="3px 7px 3px 5px">
                        <Row $gap={3}>
                            <Btn $w={40} $on>Start</Btn>
                            <Btn $w={40}>Stop</Btn>
                        </Row>
                    </Etched>
                    <Etched $grow $pad="3px 3px">
                        <Row $gap={3}>
                            <Btn $w={64}>Reverse</Btn>
                            <Btn $w={80} disabled>Show refer.</Btn>
                            <Btn $w={66} disabled>Set...</Btn>
                        </Row>
                    </Etched>
                </Row>
                <Row $justify="flex-end" $gap={44} $mt={14} $pr={6}>
                    <RadioField label="Input" checked />
                    <RadioField label="Trigger" />
                </Row>
            </Controls>
            <CornerGrip />
        </AnalyzerWindow>
    )
}

const App = () => (
    <Desktop>
        <GlobalStyle />
        <ToolRow $height={28} $gap={34}>
            <Tools $first items={['open', 'openBlue', 'save', '|', 'print', 'preview', '|', 'cut', 'copy', 'paste', '|', 'undo', 'redo']} />
            <Tools $grow $pad={12} items={['tree*', 'sheet*', 'parts', 'graph', 'drop', 'calc', 'hier', '|', 'wire', 'globes']}>
                <InUseSelect aria-label="In-use list">
                    <option>--- In-Use List ---</option>
                </InUseSelect>
            </Tools>
        </ToolRow>
        <ToolRow $height={28} $gap={18}>
            <Tools $first items={['diode', 'transistor', 'opamp', 'gateA', 'gateB', 'mixed', 'wave', 'display', 'fuse', 'misc', 'laptop', 'antenna', 'motor', 'ladder', 'ring', '|', 'chip', '|', 'block', 'step', '|', 'gear', 'run', 'pause*', 'stop']} />
            <Tools $grow $pad={14} items={['stopGray']} />
        </ToolRow>
        <Workspace>
            <Dock>
                <DockTitle>
                    <DockStripe />
                    <DockButton aria-label="Collapse"><svg width="7" height="5"><path d="M3.500 1L7 4H0z" fill="#aca899" /></svg></DockButton>
                    <DockButton aria-label="Close panel"><svg width="8" height="8"><path d="M1 1l6 6M7 1L1 7" stroke="#000" strokeWidth="1.500" /></svg></DockButton>
                </DockTitle>
                <DockTools>
                    <svg width="32" height="18">
                        <path d="M0 3l2-2v15M0 5l4-1" stroke="#a01818" fill="none" />
                        <path d="M20 4h9v11h-9z" fill="#b4b0a0" />
                        <path d="M16 4.500h7M19.500 4v8" stroke="#8e8a7a" fill="none" />
                        <path d="M27 7.500h-4v4h4" stroke="#ece9d8" fill="none" />
                    </svg>
                    <svg width="16" height="17" stroke="#222">
                        <path d="M.5 12V1.500h9v2" fill="#ffff80" />
                        <path d="M2.500 13V3.500h9v2" fill="#ffff80" />
                        <path d="M5 15.500h-.5v-10h10v10z" fill="#ffff80" />
                        <circle cx="10" cy="11" r="4.500" fill="#fff" />
                        <path d="M10 8v3.500h3" fill="none" />
                    </svg>
                </DockTools>
                <DockTree />
            </Dock>
            <Editor>
                <Schematic />
                <EditorScroll><EditorThumb /></EditorScroll>
            </Editor>
        </Workspace>
        <Oscilloscope title="Oscilloscope-XSC2" left={0} top={116} signal="burst" scroll={48} />
        <Oscilloscope title="Oscilloscope-XSC1" left={584} top={253} signal="ripple" scroll={1} />
        <SpectrumAnalyzer />
    </Desktop>
)

export default App
